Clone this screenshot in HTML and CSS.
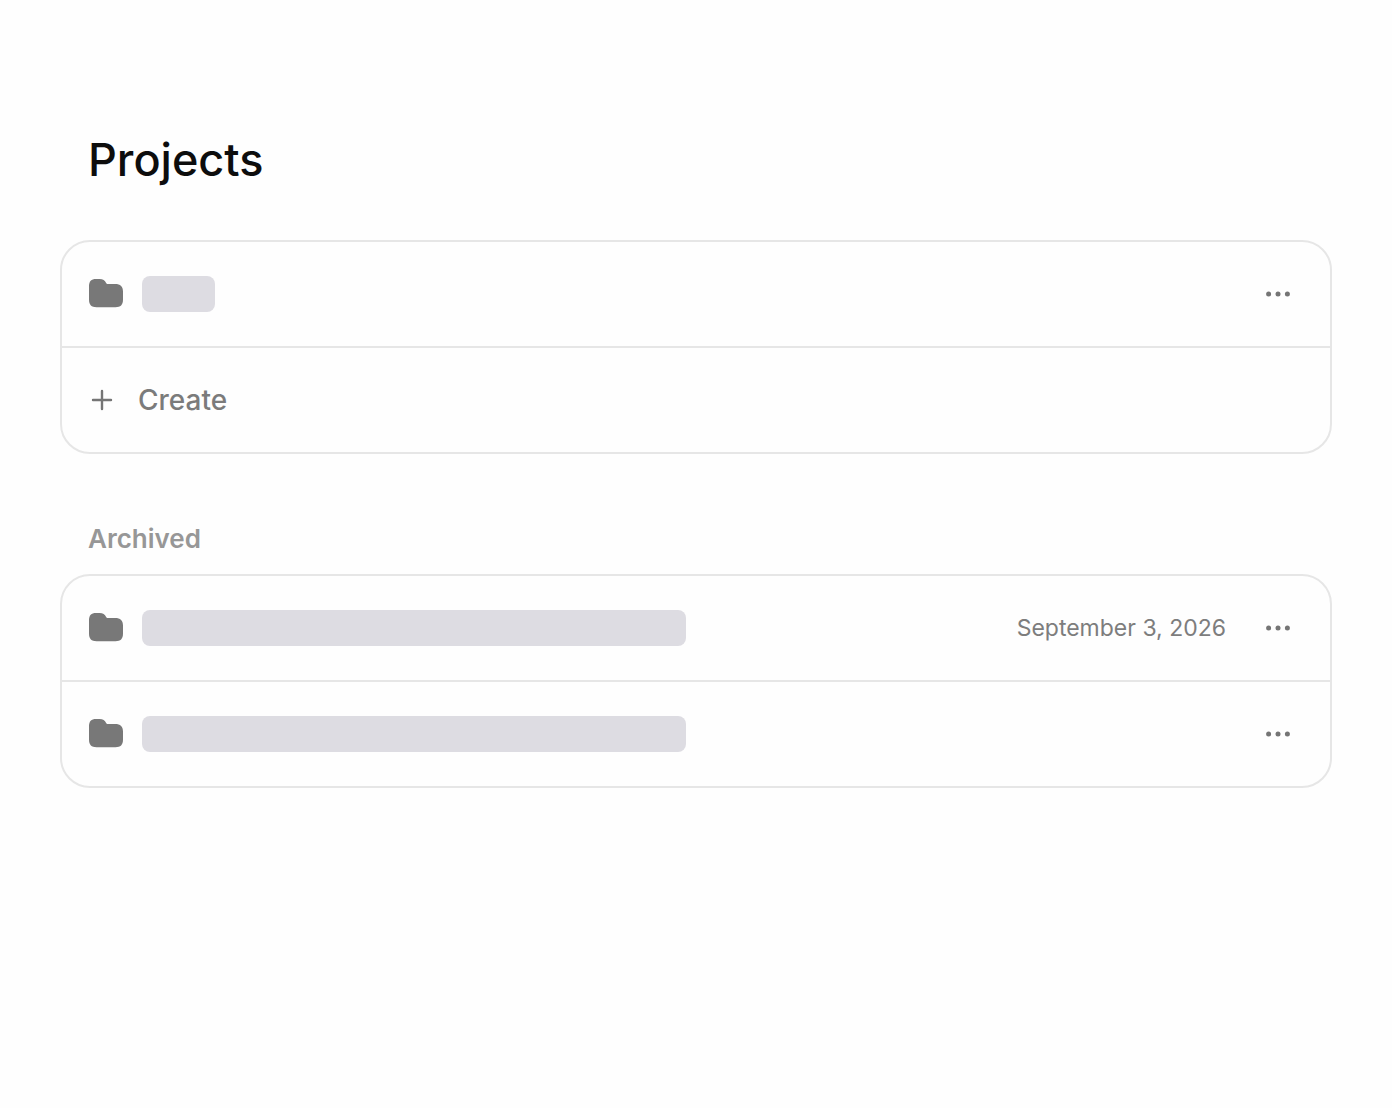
FILE: index.html
```html
<!DOCTYPE html>
<html lang="en">
<head>
    <meta charset="UTF-8">
    <meta name="viewport" content="width=device-width, initial-scale=1.0">
    <title>Projects</title>
    <link rel="stylesheet" href="styles.css">
</head>
<body>
    <!-- Shared icons -->
    <svg class="sprite" aria-hidden="true">
        <symbol id="icon-folder" viewBox="0 0 36 32">
            <path d="M1 8.500C1 3.300 3.200 1 8 1H11.500C15 1 17 2.300 18 4.800C18.400 5.800 18.900 6 20 6H27C32.500 6 35 8.500 35 13.500V21.500C35 27 32.500 29.200 27.500 29.200H8.500C3.500 29.200 1 27 1 21.500Z"/>
        </symbol>
        <symbol id="icon-dots" viewBox="0 0 28 28">
            <circle cx="4.600" cy="14" r="2.500"/>
            <circle cx="14" cy="14" r="2.500"/>
            <circle cx="23.400" cy="14" r="2.500"/>
        </symbol>
    </svg>

    <main class="page">
        <h1 class="title">Projects</h1>

        <div class="card">
            <div class="row">
                <svg class="folder" aria-hidden="true"><use href="#icon-folder"/></svg>
                <span class="placeholder placeholder-short"></span>
                <button class="menu" type="button" aria-label="More options">
                    <svg class="dots"><use href="#icon-dots"/></svg>
                </button>
            </div>
            <button class="row create" type="button">
                <svg class="plus" viewBox="0 0 28 28" aria-hidden="true">
                    <path d="M14 5V23M5 14H23"/>
                </svg>
                Create
            </button>
        </div>

        <h2 class="section-title">Archived</h2>

        <div class="card">
            <div class="row">
                <svg class="folder" aria-hidden="true"><use href="#icon-folder"/></svg>
                <span class="placeholder"></span>
                <time class="date" datetime="2026-09-03">September 3, 2026</time>
                <button class="menu" type="button" aria-label="More options">
                    <svg class="dots"><use href="#icon-dots"/></svg>
                </button>
            </div>
            <div class="row">
                <svg class="folder" aria-hidden="true"><use href="#icon-folder"/></svg>
                <span class="placeholder"></span>
                <button class="menu" type="button" aria-label="More options">
                    <svg class="dots"><use href="#icon-dots"/></svg>
                </button>
            </div>
        </div>
    </main>
</body>
</html>
```
FILE: styles.css
```css
* {
    box-sizing: border-box;
}
body {
    margin: 0;
    background-color: #fefefe;
    color: #0d0d0d;
    font-family: Inter, "Liberation Sans", sans-serif;
}
.sprite {
    display: none;
}
.page {
    padding: 130px 60px;
}
.title {
    margin: 0 0 50px;
    padding: 0 28px;
    font-size: 45px;
    line-height: 60px;
    font-weight: 500;
}
.section-title {
    margin: 67px 0 17px;
    padding: 0 28px;
    font-size: 26px;
    line-height: 36px;
    font-weight: 600;
    color: #979797;
}
.card {
    border: 2px solid #e6e6e6;
    border-radius: 30px;
    overflow: hidden;
}
.row {
    display: flex;
    align-items: center;
    height: 104px;
    padding: 0 26px;
}
.row + .row {
    height: 106px;
    border-top: 2px solid #e6e6e6;
}
.folder {
    width: 36px;
    height: 32px;
    margin-right: 18px;
    fill: #787878;
}
.placeholder {
    width: 544px;
    height: 36px;
    border-radius: 8px;
    background-color: #dddce2;
}
.placeholder-short {
    width: 73px;
}
.date {
    margin-left: auto;
    font-size: 23px;
    line-height: 32px;
    color: #7d7d7d;
}
.menu {
    display: flex;
    align-items: center;
    justify-content: center;
    width: 52px;
    height: 52px;
    margin-left: auto;
    padding: 0;
    border: none;
    border-radius: 12px;
    background: none;
    cursor: pointer;
}
.date + .menu {
    margin-left: 26px;
}
.dots {
    width: 28px;
    height: 28px;
    fill: #757575;
}
.create {
    width: 100%;
    gap: 22px;
    border: none;
    background: none;
    font-family: inherit;
    font-size: 28px;
    line-height: 36px;
    font-weight: 500;
    color: #7b7b7b;
    text-align: left;
    cursor: pointer;
}
.row + .create {
    border-top: 2px solid #e6e6e6;
}
.plus {
    width: 28px;
    height: 28px;
    fill: none;
    stroke: #757575;
    stroke-width: 2.4;
    stroke-linecap: round;
}
.menu:hover,
.create:hover {
    background-color: #f4f4f4;
}
```
